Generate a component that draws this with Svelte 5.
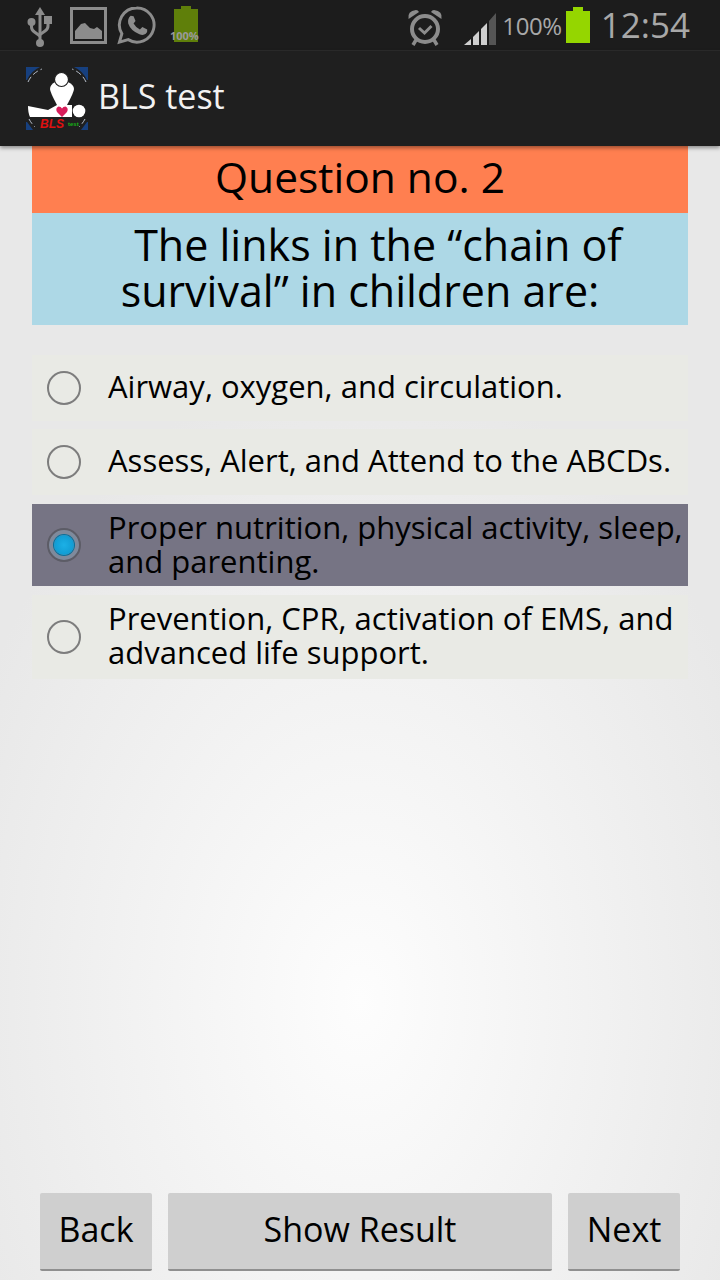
<script lang="ts">
  const options = [
    { text: "Airway, oxygen, and circulation.", checked: false },
    { text: "Assess, Alert, and Attend to the ABCDs.", checked: false },
    { text: "Proper nutrition, physical activity, sleep, and parenting.", checked: true },
    { text: "Prevention, CPR, activation of EMS, and advanced life support.", checked: false },
  ];
</script>

<div class="screen">
  <header class="status">
    <div class="status-left">
      <svg width="26" height="40" viewBox="0 0 26 40" class="usb">
        <path d="M13 0l-5 8h3.500v26h3V8H18z" fill="#8c8c8c" />
        <circle cx="13" cy="36" r="4" fill="#8c8c8c" />
        <circle cx="4.500" cy="15" r="4" fill="#8c8c8c" />
        <rect x="17" y="9" width="8" height="8" fill="#8c8c8c" />
        <path d="M4.500 17v3q0 3 3 5l5.500 4M21 16v3q0 3-3 5l-5 3.500" fill="none" stroke="#8c8c8c" stroke-width="3" />
      </svg>
      <svg width="37" height="37" viewBox="0 0 37 37" class="gallery">
        <rect x="1.500" y="1.500" width="34" height="34" fill="none" stroke="#8c8c8c" stroke-width="3" />
        <path d="M5 32V24l6-7 4-1 5 5 4 1 3-2 5 4v8z" fill="#8c8c8c" />
      </svg>
      <svg width="39" height="40" viewBox="0 0 40 40" class="whatsapp">
        <path d="M20 2.500A17.500 17.500 0 0 0 5 29L2.500 37.500l9-2.500A17.500 17.500 0 1 0 20 2.500z" fill="none" stroke="#8c8c8c" stroke-width="3" />
        <path d="M14 10.500l3 .5 2 5-2 2.500q2.500 4.500 6.500 6l2.500-2.500 5 2.500q.5 3-1.500 4.500-2.500 2-6.500.5-9-3.500-11.500-11-1-5 2.500-8z" fill="#8c8c8c" />
      </svg>
      <div class="mini-battery">
        <span class="mini-cap"></span>
        <span class="mini-body"></span>
        <span class="mini-label">100%</span>
      </div>
    </div>
    <div class="status-right">
      <svg width="36" height="38" viewBox="0 0 36 38" class="alarm">
        <circle cx="18" cy="21" r="13" fill="none" stroke="#8c8c8c" stroke-width="4" />
        <path d="M12 20l5.500 5 7-7" fill="none" stroke="#8c8c8c" stroke-width="3" />
        <path d="M1.500 11Q0 3 9 2q2 0 3 2zM34.500 11Q36 3 27 2q-2 0-3 2z" fill="#8c8c8c" />
        <path d="M9 32l-3 5M27 32l3 5" stroke="#8c8c8c" stroke-width="3.500" />
      </svg>
      <svg width="34" height="34" viewBox="0 0 34 34" class="signal">
        <path d="M0 33L7 27V33z" fill="#cfcfcf" />
        <path d="M9 25l6-6v14H9z" fill="#cfcfcf" />
        <path d="M17 17l6-6v22h-6z" fill="#cfcfcf" />
        <path d="M25 9l7-8v32h-7z" fill="#555" />
      </svg>
      <span class="percent">100%</span>
      <div class="battery">
        <span class="battery-cap"></span>
        <span class="battery-body"></span>
      </div>
      <span class="clock">12:54</span>
    </div>
  </header>

  <div class="actionbar">
    <svg width="62" height="64" viewBox="0 0 62 64" class="logo">
      <path d="M0 0h14Q5 4 1 13H0zM62 0H48q9 4 13 13h1zM0 63V55h1q3 4 6 8zM62 63V55h-1q-3 4-6 8z" fill="#17407f" />
      <path d="M2 15Q6 6 16 2M60 15Q56 6 46 2M3 52q2 4 6 8M59 52q-2 4-6 8" fill="none" stroke="#b8c0cc" stroke-width="1" stroke-dasharray="6 3" />
      <path d="M29 15Q24 18 24 22 24 25 31 38H41Q48 25 48 22 48 18 42 15z" fill="#fff" />
      <circle cx="35.500" cy="12.500" r="7" fill="#fff" stroke="#1f1f1f" stroke-width="1.200" />
      <path d="M2 39L22 43 31 38H46V50H4Q2 46 2 39z" fill="#fff" />
      <circle cx="53" cy="44" r="6.300" fill="#fff" />
      <path d="M36 50l-5-5q-2-4 1.500-5.500 2.500 0 3.500 2 1-2 3.500-2 3.500 1.500 1.500 5.500z" fill="#d81e5b" />
      <text x="14" y="61" class="logo-bls">BLS</text>
      <text x="42" y="59" class="logo-test">test</text>
    </svg>
    <span class="app-title">BLS test</span>
  </div>

  <main class="content">
    <div class="question-no">Question no. 2</div>
    <div class="question">The links in the “chain of survival” in children are:</div>

    <div class="options">
      {#each options as opt}
        <div class="option" class:selected={opt.checked}>
          <span class="radio" class:on={opt.checked}></span>
          <span class="option-text">{opt.text}</span>
        </div>
      {/each}
    </div>
  </main>

  <footer class="buttons">
    <button class="btn side">Back</button>
    <button class="btn wide">Show Result</button>
    <button class="btn side">Next</button>
  </footer>
</div>

<style>
  :global(body) {
    margin: 0;
  }

  .screen {
    width: 720px;
    height: 1280px;
    display: flex;
    flex-direction: column;
    overflow: hidden;
    font-family: "Open Sans", "Noto Sans", sans-serif;
    background: radial-gradient(ellipse 430px 640px at 360px 1000px, #fdfdfd 0%, #e8e8e8 100%);
  }

  .status {
    height: 50px;
    flex: none;
    display: flex;
    justify-content: space-between;
    align-items: center;
    background: #1c1c1c;
    border-bottom: 1px solid #2b2b2b;
    padding: 0 30px 0 27px;
  }

  .status-left,
  .status-right {
    display: flex;
    align-items: center;
  }

  .usb {
    margin: 4px 17px 0 0;
  }

  .gallery {
    margin-right: 10px;
  }

  .mini-battery {
    position: relative;
    width: 30px;
    height: 38px;
    margin-left: 15px;
    display: flex;
    flex-direction: column;
    align-items: center;
  }

  .mini-cap {
    width: 10px;
    height: 3px;
    background: #5f7f0a;
  }

  .mini-body {
    width: 24px;
    height: 33px;
    background: #5f7f0a;
  }

  .mini-label {
    position: absolute;
    bottom: 1px;
    left: -1px;
    font-size: 11px;
    font-weight: 700;
    color: #9a9a9a;
  }

  .alarm {
    margin: 4px 21px 0 0;
  }

  .signal {
    margin: 8px 4px 0 0;
  }

  .percent {
    font-size: 24px;
    color: #a8a8a8;
    letter-spacing: -0.4px;
  }

  .battery {
    display: flex;
    flex-direction: column;
    align-items: center;
    margin: 0 11px 0 4px;
  }

  .battery-cap {
    width: 10px;
    height: 4px;
    background: #95d600;
  }

  .battery-body {
    width: 24px;
    height: 32px;
    background: #95d600;
  }

  .clock {
    font-size: 35px;
    line-height: 44px;
    color: #a8a8a8;
  }

  .actionbar {
    height: 95px;
    flex: none;
    display: flex;
    align-items: center;
    gap: 10px;
    padding-left: 26px;
    background: #1f1f1f;
    box-shadow: 0 2px 4px rgba(0, 0, 0, 0.4);
    position: relative;
  }

  .logo-bls {
    font: italic 700 12px "Liberation Sans", sans-serif;
    fill: #e01010;
  }

  .logo-test {
    font: 700 6px "Liberation Sans", sans-serif;
    fill: #17b017;
  }

  .app-title {
    font-size: 34px;
    line-height: 40px;
    margin-top: -6px;
    color: #f2f2f2;
  }

  .content {
    flex: 1;
    padding: 0 32px;
  }

  .question-no {
    height: 67px;
    background: #ff7f50;
    text-align: center;
    font-size: 42.500px;
    line-height: 62px;
    color: #000;
  }

  .question {
    height: 112px;
    box-sizing: border-box;
    padding: 9px 40px 0;
    background: #add8e6;
    text-align: center;
    font-size: 43px;
    line-height: 46px;
    text-indent: 36px;
    color: #000;
  }

  .options {
    display: flex;
    flex-direction: column;
    gap: 8px;
    margin-top: 30px;
  }

  .option {
    min-height: 66px;
    box-sizing: border-box;
    display: flex;
    align-items: center;
    gap: 27px;
    padding: 7px 0 7px 15px;
    background: #e9eae5;
    font-size: 31px;
    line-height: 34px;
    color: #000;
  }

  .option:last-child {
    min-height: 84px;
  }

  .option-text {
    margin-top: -4px;
  }

  .option.selected {
    min-height: 82px;
    background: #767484;
    margin: 1px 0;
  }

  .selected .option-text {
    margin-top: -2px;
  }

  .radio {
    flex: none;
    position: relative;
    width: 34px;
    height: 34px;
    box-sizing: border-box;
    border: 2px solid #7d7d7d;
    border-radius: 50%;
  }

  .radio.on {
    background: #7f8a9c;
    border-color: #5c5c66;
  }

  .radio.on::after {
    content: "";
    position: absolute;
    inset: 5px;
    border-radius: 50%;
    background: radial-gradient(circle, #1cb0e6, #0c93ca);
    box-shadow: 0 0 0 1px #0b6f99;
  }

  .buttons {
    flex: none;
    display: flex;
    gap: 16px;
    padding: 0 40px 9px;
  }

  .btn {
    height: 78px;
    border: none;
    border-radius: 2px;
    background: #cfcfcf;
    border-bottom: 2px solid #8f8f8f;
    font-family: inherit;
    font-size: 34px;
    color: #000;
    padding: 0 0 4px;
  }

  .btn.side {
    width: 112px;
  }

  .btn.wide {
    flex: 1;
  }
</style>
